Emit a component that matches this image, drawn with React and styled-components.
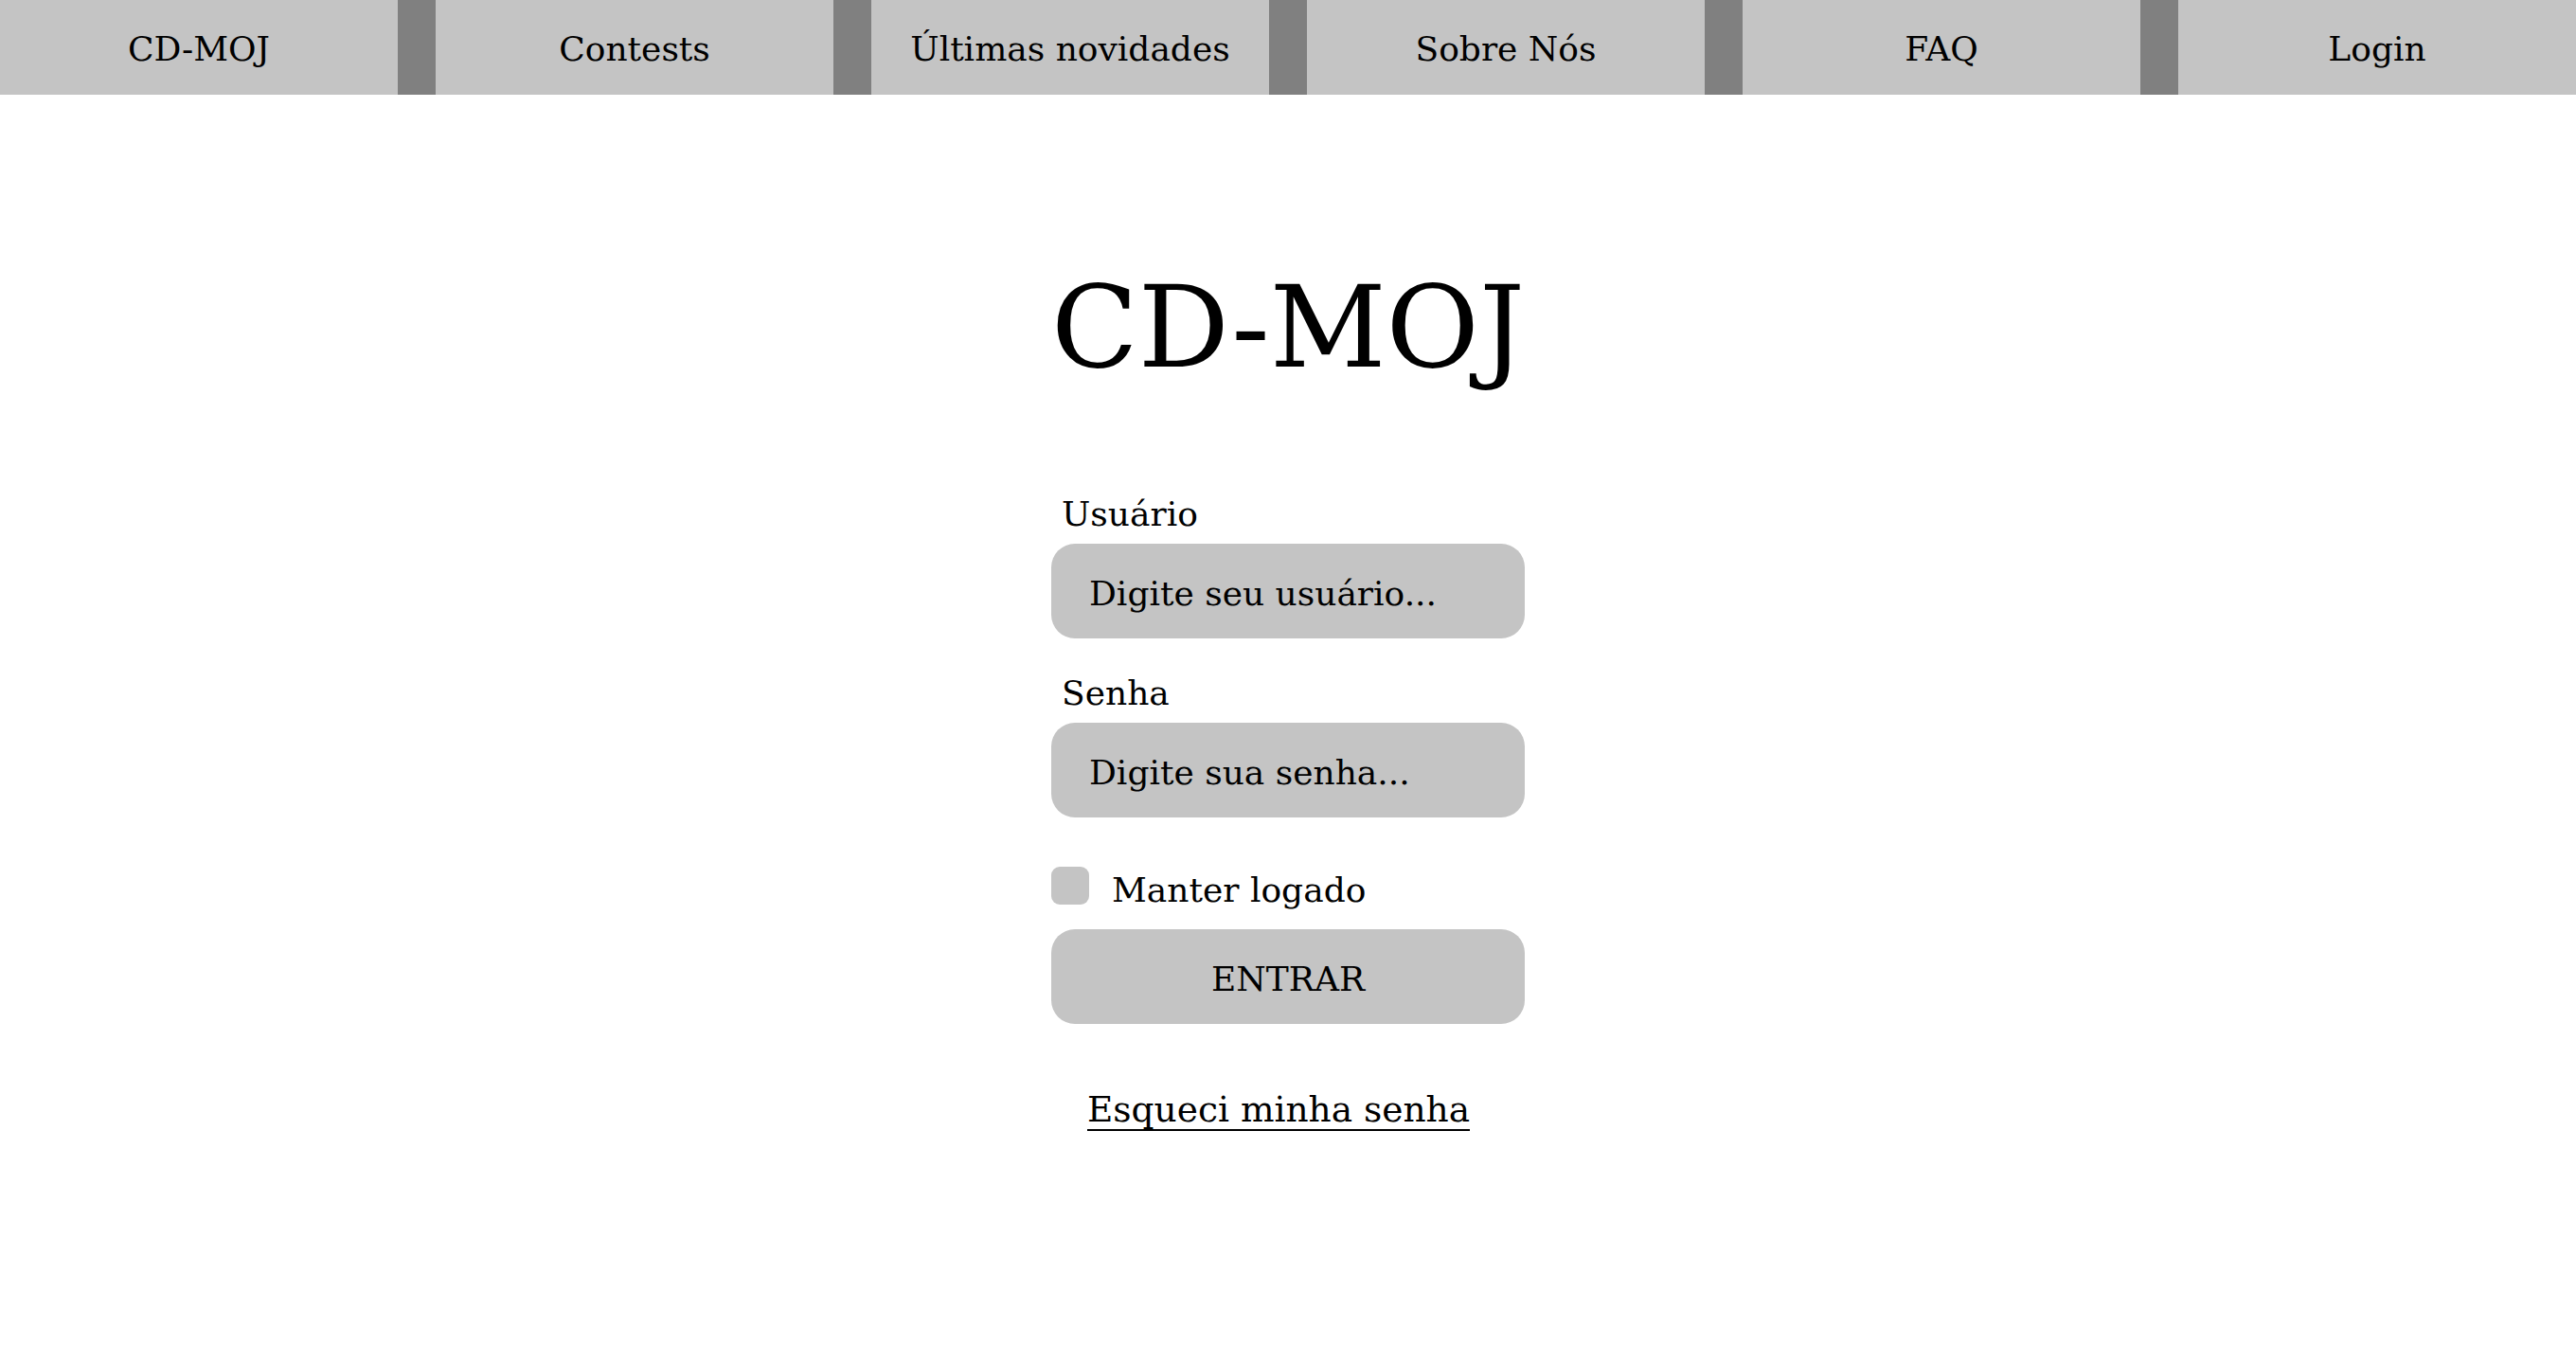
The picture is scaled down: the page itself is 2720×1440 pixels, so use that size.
import React from 'react'
import styled, { createGlobalStyle } from 'styled-components'

const navItems = ['CD-MOJ', 'Contests', 'Últimas novidades', 'Sobre Nós', 'FAQ', 'Login']

export default function App() {
  return (
    <>
      <GlobalStyle />
      <NavBar>
        {navItems.map((item) => (
          <NavItem key={item}>{item}</NavItem>
        ))}
      </NavBar>
      <Main>
        <Title>CD-MOJ</Title>
        <Form onSubmit={(e) => e.preventDefault()}>
          <Label htmlFor="user">Usuário</Label>
          <Input id="user" placeholder="Digite seu usuário..." />
          <Label htmlFor="pass" $spaced>Senha</Label>
          <Input id="pass" type="password" placeholder="Digite sua senha..." />
          <CheckRow>
            <Check type="checkbox" />
            <CheckText>Manter logado</CheckText>
          </CheckRow>
          <Button type="submit">ENTRAR</Button>
          <Forgot href="#">Esqueci minha senha</Forgot>
        </Form>
      </Main>
    </>
  )
}

const GlobalStyle = createGlobalStyle`
  body {
    margin: 0;
    background: #fff;
    font-family: "Roboto Slab", "DejaVu Serif", serif;
    color: #000;
  }
`

const NavBar = styled.nav`
  display: grid;
  grid-template-columns: repeat(6, 1fr);
  column-gap: 40px;
  height: 100px;
  background: #808080;
`

const NavItem = styled.a`
  display: flex;
  align-items: center;
  justify-content: center;
  padding-top: 4px;
  box-sizing: border-box;
  background: #c4c4c4;
  font-size: 36px;
  line-height: 1;
  color: #000;
  text-decoration: none;
`

const Main = styled.main`
  display: flex;
  flex-direction: column;
  align-items: center;
  padding-top: 186px;
`

const Title = styled.h1`
  margin: 0;
  font-size: 120px;
  font-weight: 400;
  line-height: 1;
`

const Form = styled.form`
  display: flex;
  flex-direction: column;
  width: 500px;
  margin-top: 119px;
`

const Label = styled.label`
  display: block;
  margin: ${(p) => (p.$spaced ? '40px' : '0')} 0 13px 11px;
  font-size: 36px;
  line-height: 1;
`

const Input = styled.input`
  box-sizing: border-box;
  width: 100%;
  height: 100px;
  padding: 4px 40px 0;
  border: none;
  border-radius: 25px;
  background: #c4c4c4;
  font-family: inherit;
  font-size: 36px;
  color: #000;
  outline: none;
  &::placeholder {
    color: #000;
  }
`

const CheckRow = styled.label`
  display: flex;
  align-items: flex-start;
  gap: 24px;
  margin-top: 52px;
`

const Check = styled.input`
  appearance: none;
  width: 40px;
  height: 40px;
  margin: 0;
  border-radius: 9px;
  background: #c4c4c4;
`

const CheckText = styled.span`
  margin-top: 7px;
  font-size: 36px;
  line-height: 1;
`

const Button = styled.button`
  height: 100px;
  margin-top: 23px;
  padding-top: 5px;
  border: none;
  border-radius: 25px;
  background: #c4c4c4;
  font-family: inherit;
  font-size: 36px;
  color: #000;
  cursor: pointer;
`

const Forgot = styled.a`
  align-self: flex-start;
  display: inline-block;
  margin: 72px 0 0 38px;
  padding-bottom: 1px;
  border-bottom: 2px solid #000;
  font-size: 37.5px;
  line-height: 1;
  color: #000;
  text-decoration: none;
`
